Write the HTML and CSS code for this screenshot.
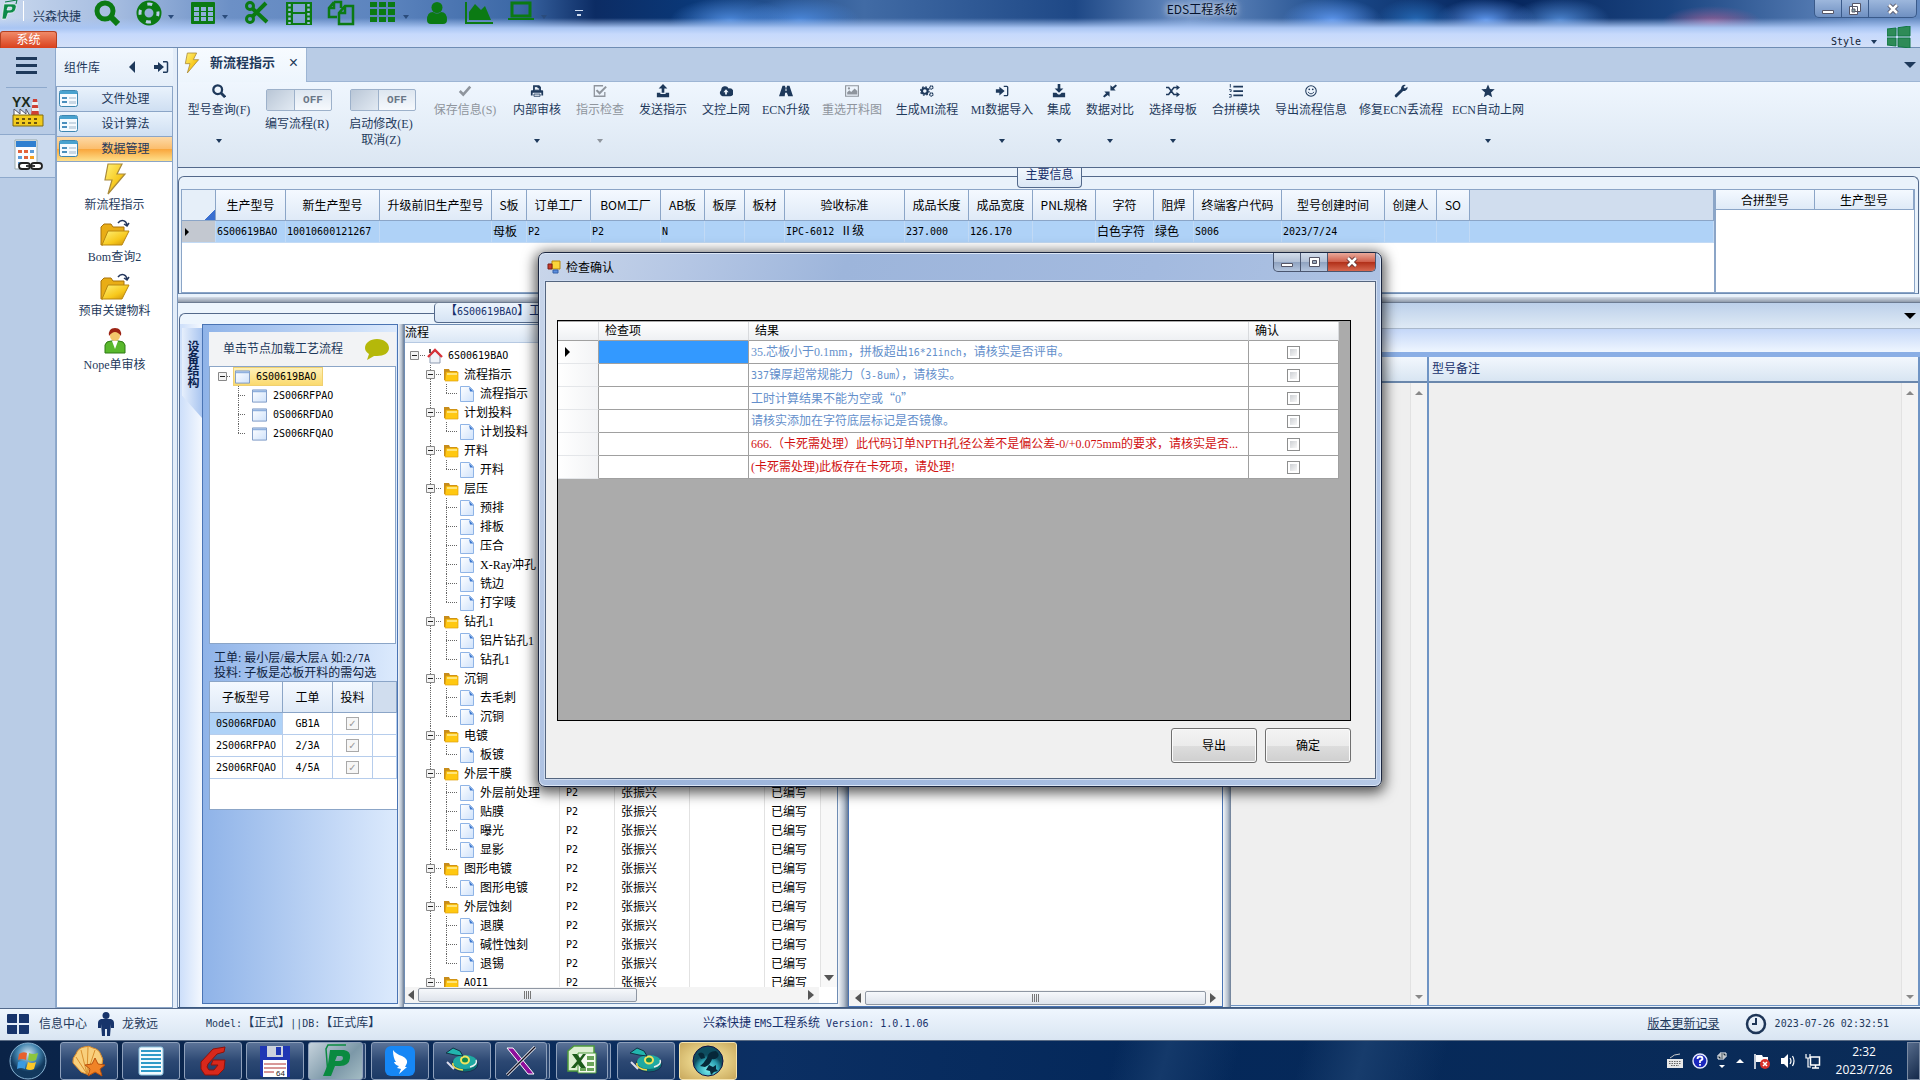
FILE: index.html
```html
<!DOCTYPE html>
<html lang="zh-CN">
<head>
<meta charset="utf-8">
<title>EDS工程系统</title>
<link rel="stylesheet" href="styles.css">
</head>
<body>
<svg class="defs" aria-hidden="true">
  <defs>
    <linearGradient id="gold" x1="0" y1="0" x2="1" y2="1"><stop offset="0" stop-color="#fff27a"/><stop offset=".6" stop-color="#f7c81c"/><stop offset="1" stop-color="#c98a08"/></linearGradient>
    <linearGradient id="paper" x1="0" y1="0" x2="1" y2="1"><stop offset="0" stop-color="#fff"/><stop offset="1" stop-color="#cfe2fb"/></linearGradient>
    <radialGradient id="orb" cx=".5" cy=".3"><stop offset="0" stop-color="#d5e6f2"/><stop offset=".6" stop-color="#3f82ad"/><stop offset="1" stop-color="#12395e"/></radialGradient>
    <radialGradient id="teal" cx=".5" cy=".8"><stop offset="0" stop-color="#7df0f2"/><stop offset=".7" stop-color="#2a9fb0"/><stop offset="1" stop-color="#0e4d60"/></radialGradient>
  </defs>
  <symbol id="bolt" viewBox="0 0 24 32"><path d="M5 1h14l-5 10h8L5 31l4-14H2z" fill="url(#gold)" stroke="#a98a3a" stroke-width="1.2"/></symbol>
  <symbol id="folder-open" viewBox="0 0 32 28"><path d="M2 8l3-3h7l2 3h11v5H9L4 26H2z" fill="#e9ad16" stroke="#a8720a"/><path d="M9 12h21l-7 14H3z" fill="url(#gold)" stroke="#b98710"/><path d="M19 4c3-4 8-3 9 2m-3-1l3 2 2-3" fill="none" stroke="#22355c" stroke-width="1.5"/></symbol>
  <symbol id="folder" viewBox="0 0 16 16"><path d="M1 2h5l1 2h7v9H1z" fill="#c88d1a"/><path d="M3 5h12v9H2z" fill="#ffc811" stroke="#e0a010" stroke-width=".7"/><path d="M4 6h10v2H4z" fill="#ffe57a"/></symbol>
  <symbol id="doc" viewBox="0 0 16 16"><path d="M1.500 .5h9l4 4v11h-13z" fill="url(#paper)" stroke="#8fb4e6"/><path d="M10 1l4.500 4.500H11z" fill="#3c78cf"/></symbol>
  <symbol id="win" viewBox="0 0 16 14"><path d="M.5 .5h15v13H.5z" fill="url(#paper)" stroke="#7b98c4"/><path d="M1 1h14v2H1z" fill="#8fb0de"/></symbol>
  <symbol id="form" viewBox="0 0 20 18"><rect x=".5" y=".5" width="18" height="16" rx="2" fill="#f4faff" stroke="#3d86b0"/><path d="M1 1h17v3H1z" fill="#49a2cf"/><path d="M3 7h5v2H3zm0 4h5v2H3z" fill="#4a8fbd"/><path d="M10 7h7v2h-7zm0 4h7v3h-7z" fill="#c9d8e5"/></symbol>
  <symbol id="home" viewBox="0 0 16 16"><path d="M3 8l5-5 5 5v7H3z" fill="#eef2f8" stroke="#8d9ab0"/><path d="M1 9l7-7 7 7" fill="none" stroke="#d8333a" stroke-width="2.400"/><path d="M2 1h2v4H2z" fill="#555"/></symbol>
  <symbol id="box" viewBox="0 0 9 9"><path d="M.5 .5h8v8h-8z" fill="#f4f4f4" stroke="#888"/><path d="M2 4.500h5" stroke="#222"/></symbol>
  <symbol id="search" viewBox="0 0 16 16"><circle cx="6.500" cy="6.500" r="5" fill="none" stroke="currentColor" stroke-width="2.600"/><path d="M10 10l5 5" stroke="currentColor" stroke-width="3.200"/></symbol>
  <symbol id="check" viewBox="0 0 16 16"><path d="M2 8l4 4 8-9" fill="none" stroke="currentColor" stroke-width="3"/></symbol>
  <symbol id="print" viewBox="0 0 16 16"><path d="M3.500 7V1.500h7l2 2V7M2 7h12q1 0 1 1v5h-2v-3H3v3H1V8q0-1 1-1z" fill="currentColor"/><path d="M5 3h4v1.500h2V7H5zM4.500 11.500h7v2.500h-7z" fill="#f0f6fd" stroke="currentColor"/></symbol>
  <symbol id="checkbox" viewBox="0 0 16 16"><path d="M13.500 9v5h-12V2h10" fill="none" stroke="currentColor" stroke-width="1.500"/><path d="M4 7l3.500 3.500L15 3" fill="none" stroke="currentColor" stroke-width="2.400"/></symbol>
  <symbol id="upload" viewBox="0 0 16 16"><path d="M8 0l5 5h-3.500v5h-3V5H3zM1 10h4v1.500h6V10h4v5H1z" fill="currentColor"/></symbol>
  <symbol id="download" viewBox="0 0 16 16"><path d="M6.500 0h3v5H13l-5 5-5-5h3.500zM1 10h4l2 2h2l2-2h4v5H1z" fill="currentColor"/></symbol>
  <symbol id="cloud" viewBox="0 0 16 16"><path d="M4 14a4 4 0 0 1-1.500-7A4.500 4.500 0 0 1 11 5a4 4 0 0 1 2 9z" fill="currentColor"/><path d="M8 6l3 3.500H9V12H7V9.500H5z" fill="#f0f6fd"/></symbol>
  <symbol id="road" viewBox="0 0 16 16"><path d="M4 2h3v2h2V2h3l4 12h-5.500L9 10H7l-.5 4H0z" fill="currentColor"/><path d="M7.400 5h1.200v3H7.400z" fill="#f0f6fd"/></symbol>
  <symbol id="image" viewBox="0 0 16 16"><path d="M.7 2h14.600v12H.7z" fill="none" stroke="currentColor" stroke-width="1.300"/><path d="M2.500 12V9.500L5 7l2 2 4-4 3 3v4z" fill="currentColor"/><circle cx="4.500" cy="5" r="1.300" fill="currentColor"/></symbol>
  <symbol id="gears" viewBox="0 0 16 16"><circle cx="5.500" cy="8" r="3.200" fill="none" stroke="currentColor" stroke-width="2.400"/><circle cx="5.500" cy="8" r="4.800" fill="none" stroke="currentColor" stroke-width="1.500" stroke-dasharray="1.900 1.870"/><circle cx="13" cy="4" r="1.800" fill="none" stroke="currentColor" stroke-width="1.500" stroke-dasharray="1.600 .4"/><circle cx="13" cy="12" r="1.800" fill="none" stroke="currentColor" stroke-width="1.500" stroke-dasharray="1.600 .4"/></symbol>
  <symbol id="signin" viewBox="0 0 16 16"><path d="M1 6h4V3l6 5-6 5v-3H1z" fill="currentColor"/><path d="M10 2.700h3.500q1 0 1 1v8.600q0 1-1 1H10" fill="none" stroke="currentColor" stroke-width="1.500"/></symbol>
  <symbol id="compress" viewBox="0 0 16 16"><path d="M8.500 1.500v6h6l-2-2L16 2l-1.500-1.500L11 3.500zM7.500 14.500v-6h-6l2 2L0 14l1.500 1.500L5.500 12.500z" fill="currentColor"/></symbol>
  <symbol id="shuffle" viewBox="0 0 16 16"><path d="M0 4h3l6 8h4M0 12h3l6-8h4" fill="none" stroke="currentColor" stroke-width="1.800"/><path d="M12 1l4 3-4 3zM12 9l4 3-4 3z" fill="currentColor"/></symbol>
  <symbol id="list" viewBox="0 0 16 16"><path d="M5 3h11M5 8h11M5 13h11" stroke="currentColor" stroke-width="2"/><path d="M1.500 0v4M0 6.500h2.500v2H1M0 12h2.500v3H0" fill="none" stroke="currentColor"/></symbol>
  <symbol id="smile" viewBox="0 0 16 16"><circle cx="8" cy="8" r="6" fill="none" stroke="currentColor" stroke-width="1.200"/><circle cx="6" cy="6" r="1" fill="currentColor"/><circle cx="10" cy="6" r="1" fill="currentColor"/><path d="M4.500 9q3.500 4.500 7 0" fill="none" stroke="currentColor"/></symbol>
  <symbol id="wrench" viewBox="0 0 16 16"><path d="M2.500 13.500l7-7" stroke="currentColor" stroke-width="3.400" stroke-linecap="round"/><path d="M13.500 1l-2.500 2.500 1.500 1.700L15.500 3a4.300 4.300 0 0 1-7 4A4.300 4.300 0 0 1 13.500 1z" fill="currentColor"/></symbol>
  <symbol id="star" viewBox="0 0 16 16"><path d="M8 .5l2.200 5.200 5.500.4-4.300 3.600 1.400 5.500L8 12.200l-4.800 3 1.400-5.500L.3 6.100l5.500-.4z" fill="currentColor"/></symbol>
  <symbol id="disc" viewBox="0 0 34 30"><ellipse cx="20" cy="18" rx="13" ry="8" fill="#0b6f73" stroke="#1c2f52"/><ellipse cx="20" cy="16" rx="12" ry="7" fill="#1fa9a2"/><path d="M8 17a12 6 0 0 0 10 7" fill="none" stroke="#f0d94a" stroke-width="1.500"/><path d="M31 14a12 6 0 0 1-6 7" fill="none" stroke="#eee" stroke-width="1.500"/><ellipse cx="20" cy="14" rx="4" ry="3.500" fill="#0f8a4f" stroke="#f4e35c" stroke-width="2"/><path d="M1 7l7-5 7 3 3 5-8-1z" fill="#22b5ae" stroke="#134"/><path d="M2 16l7 7" stroke="#dde" stroke-width="2"/></symbol>
</svg>

<header class="titlebar">
  <div class="quick">
    <svg class="logo" width="18" height="24" viewBox="0 0 18 24"><path d="M4 2l12-2-1 4" fill="none" stroke="#0a7a44"/><path d="M3 4h9q4 0 3 4-1 5-6 5H7l-2 6H1zm4 3L6 10h3q2 0 2-2 0-1-1-1z" fill="#0d8a4a" stroke="#fff" stroke-width=".6"/></svg>
    <span class="bar"></span>
    <span class="brand">兴森快捷</span>
    <button class="qi" aria-label="查询"><svg width="26" height="26" viewBox="0 0 26 26"><circle cx="11" cy="11" r="8" fill="none" stroke="#0b7a13" stroke-width="5"/><path d="M17 17l7 7" stroke="#0b7a13" stroke-width="6"/></svg></button>
    <button class="qi arrow-r" aria-label="帮助"><svg width="26" height="26" viewBox="0 0 26 26"><circle cx="13" cy="13" r="8.500" fill="none" stroke="#0b7a13" stroke-width="8"/><circle cx="13" cy="13" r="9" fill="none" stroke="#b9cce9" stroke-width="3" stroke-dasharray="5 9.140" stroke-dashoffset="2"/></svg></button>
    <button class="qi arrow-r" aria-label="表格"><svg width="26" height="26" viewBox="0 0 26 26"><rect x="1" y="2" width="24" height="22" rx="1" fill="#0b7a13"/><path d="M4 7h5v4H4zm7 0h5v4h-5zm7 0h5v4h-5zM4 12h5v4H4zm7 0h5v4h-5zm7 0h5v4h-5zM4 17h5v4H4zm7 0h5v4h-5zm7 0h5v4h-5z" fill="#8fb0da"/></svg></button>
    <button class="qi" aria-label="剪切"><svg width="26" height="26" viewBox="0 0 26 26"><g fill="none" stroke="#0b7a13"><circle cx="6" cy="6" r="3.500" stroke-width="3"/><circle cx="6" cy="19" r="3.500" stroke-width="3"/><path d="M8 8l15 14M8 17L22 3" stroke-width="4"/></g></svg></button>
    <button class="qi" aria-label="胶片"><svg width="28" height="26" viewBox="0 0 28 26"><path d="M1 2h26v23H1z" fill="#0b7a13"/><path d="M8 4h12v8H8zm0 10h12v9H8z" fill="#7fa3d2"/><path d="M4.500 4v20M23.500 4v20" stroke="#9db8de" stroke-width="2.500" stroke-dasharray="2.500 2"/></svg></button>
    <button class="qi" aria-label="复制"><svg width="28" height="26" viewBox="0 0 28 26"><path d="M7 2h7v6M7 2L2 8v9h8M7 2v6H2M18 6h8v18H12V13zM18 6v7h-6" fill="none" stroke="#0b7a13" stroke-width="2.500"/></svg></button>
    <button class="qi arrow-r" aria-label="九宫格"><svg width="28" height="26" viewBox="0 0 28 26"><path d="M1 2h7v5H1zm9 0h7v5h-7zm9 0h7v5h-7zM1 9h7v6H1zm9 0h7v6h-7zm9 0h7v6h-7zM1 17h7v5H1zm9 0h7v5h-7zm9 0h7v5h-7z" fill="#0b7a13"/></svg></button>
    <button class="qi" aria-label="用户"><svg width="26" height="26" viewBox="0 0 26 26"><circle cx="13" cy="7.500" r="5.500" fill="#0b7a13"/><path d="M3 20q0-8 6-8 4 3 8 0 6 0 6 8 0 4-4 4H7q-4 0-4-4z" fill="#0b7a13"/></svg></button>
    <button class="qi" aria-label="图表"><svg width="30" height="26" viewBox="0 0 30 26"><path d="M2 2v21h27" fill="none" stroke="#0b7a13" stroke-width="2"/><path d="M5 20v-8l6-8 6 6 4-4 6 14z" fill="#0b7a13"/></svg></button>
    <button class="qi arrow-r" aria-label="电脑"><svg width="28" height="26" viewBox="0 0 28 26"><path d="M5 3h18v13H5z" fill="none" stroke="#0b7a13" stroke-width="3"/><path d="M1 18h26v2H1z" fill="#0b7a13"/></svg></button>
    <span class="more"></span>
  </div>
  <h1 class="app-title">EDS工程系统</h1>
  <div class="winbtns"><button aria-label="最小化"><svg width="14" height="12"><path d="M1.500 7.500h11v3h-11z" fill="#fff" stroke="#556"/></svg></button><button aria-label="还原"><svg width="14" height="14"><path d="M4.500 1.500h8v8h-8zM1.500 4.500h8v8h-8z" fill="#fff" stroke="#556"/><path d="M4 7h3v3H4z" fill="#8aa" stroke="#556"/></svg></button><button class="x" aria-label="关闭"><svg width="14" height="12"><path d="M3 2l8 8M11 2l-8 8" stroke="#556" stroke-width="4.500"/><path d="M3 2l8 8M11 2l-8 8" stroke="#fff" stroke-width="2.500"/></svg></button></div>
  <button class="systab">系统</button>
  <div class="style-menu"><button class="m">Style</button><svg width="24" height="22" viewBox="0 0 24 22"><path d="M0 3l9-1v8H0zM11 1.700L23 0v10H11zM0 12h9v8l-9-1zM11 12h12v10l-12-1.500z" fill="#2e8b57" stroke="#174"/></svg></div>
</header>

<main class="main">
  <nav class="rail">
    <button class="burger" aria-label="菜单"><i></i><i></i><i></i></button>
    <button class="rail-item" aria-label="YX"><svg width="34" height="34" viewBox="0 0 34 34"><text x="1" y="13" font-family="Liberation Sans" font-weight="700" font-size="14" fill="#1c2b1c">YX</text><path d="M22 5h4l2 16h-8z" fill="#cf4034"/><path d="M21 8h6v3h-6zm0 6h7v3h-7z" fill="#eee"/><path d="M3 22v-7l6 5v-5l6 5v-5l4 7z" fill="#fff" stroke="#556"/><path d="M2 21h30v11H2z" fill="#f2cb1d" stroke="#806a10"/><path d="M5 24h3v2H5zm6 0h3v2h-3zm6 0h3v2h-3zm6 0h3v2h-3zM5 28h3v2H5zm6 0h3v2h-3zm6 0h3v2h-3zm6 0h3v2h-3z" fill="#6b5410"/></svg></button>
    <button class="rail-item on" aria-label="计算"><svg width="34" height="34" viewBox="0 0 34 34"><path d="M4 1h22v29H4z" fill="#fafcff" stroke="#9aa"/><path d="M5 2h20v6H5z" fill="#2f7fd0"/><g fill="#e2623a"><path d="M7 11h4v3H7zm6 0h4v3h-4zm0 6h4v3h-4z"/></g><path d="M19 11h4v3h-4zM7 17h4v3H7zM7 23h4v3H7z" fill="#5b9bd8"/><path d="M19 17h4v3h-4z" fill="#f5a020"/><g fill="none" stroke="#222" stroke-width="1.800"><rect x="8" y="24" width="11" height="6" rx="3" fill="#fff"/><rect x="20" y="24" width="11" height="6" rx="3" fill="#fff"/><path d="M15 27h9"/></g></svg></button>
  </nav>

  <aside class="side">
    <div class="side-head"><span>组件库</span><i class="tri-l"></i><svg width="16" height="16"><use href="#signin"/></svg></div>
    <button class="acc"><svg width="20" height="18"><use href="#form"/></svg><span>文件处理</span></button>
    <button class="acc"><svg width="20" height="18"><use href="#form"/></svg><span>设计算法</span></button>
    <button class="acc on"><svg width="20" height="18"><use href="#form"/></svg><span>数据管理</span></button>
    <div class="side-list">
      <a href="#"><svg width="24" height="32"><use href="#bolt"/></svg>新流程指示</a>
      <a href="#"><svg width="32" height="28"><use href="#folder-open"/></svg>Bom查询2</a>
      <a href="#"><svg width="32" height="28"><use href="#folder-open"/></svg>预审关键物料</a>
      <a href="#"><svg width="24" height="28" viewBox="0 0 24 28"><path d="M2 26v-8q1-4 6-4h8q5 0 6 4v8z" fill="#59b82c" stroke="#2f7a14"/><path d="M9 14h6l-3 8z" fill="#fff"/><circle cx="12" cy="9" r="5" fill="#f3c66b"/><path d="M6 9q-1-8 6-8t6 8q-3-4-6-4T6 9z" fill="#9c2313"/></svg>Nope单审核</a>
    </div>
  </aside>

  <section class="work">
    <div class="tabs"><div class="tab"><svg width="16" height="22"><use href="#bolt"/></svg><b>新流程指示</b><button aria-label="关闭标签">×</button></div><i class="tri-d big"></i></div>
    <div class="tools">
      <button class="tool w60 dd"><svg><use href="#search"/></svg>型号查询(F)</button>
      <div class="tool w66"><span class="toggle"><input type="checkbox" id="t1"><span>OFF</span></span><label for="t1">编写流程(R)</label></div>
      <div class="tool w66 second"><span class="toggle"><input type="checkbox" id="t2"><span>OFF</span></span><label for="t2">启动修改(E)<br>取消(Z)</label></div>
      <button class="tool w66 off"><svg><use href="#check"/></svg>保存信息(S)</button>
      <button class="tool w48 dd"><svg><use href="#print"/></svg>内部审核</button>
      <button class="tool w48 dd off"><svg><use href="#checkbox"/></svg>指示检查</button>
      <button class="tool w48"><svg><use href="#upload"/></svg>发送指示</button>
      <button class="tool w48"><svg><use href="#cloud"/></svg>文控上网</button>
      <button class="tool w42"><svg><use href="#road"/></svg>ECN升级</button>
      <button class="tool w60 off"><svg><use href="#image"/></svg>重选开料图</button>
      <button class="tool w60"><svg><use href="#gears"/></svg>生成MI流程</button>
      <button class="tool w60 dd"><svg><use href="#signin"/></svg>MI数据导入</button>
      <button class="tool w24 dd"><svg><use href="#download"/></svg>集成</button>
      <button class="tool w48 dd"><svg><use href="#compress"/></svg>数据对比</button>
      <button class="tool w48 dd"><svg><use href="#shuffle"/></svg>选择母板</button>
      <button class="tool w48"><svg><use href="#list"/></svg>合拼模块</button>
      <button class="tool w72"><svg><use href="#smile"/></svg>导出流程信息</button>
      <button class="tool w78"><svg><use href="#wrench"/></svg>修复ECN丢流程</button>
      <button class="tool w66 dd"><svg><use href="#star"/></svg>ECN自动上网</button>
    </div>

    <section class="info">
      <h2 class="cap">主要信息</h2>
      <div class="info-body">
        <div class="info-left">
          <table class="grid">
            <colgroup><col class="c34"><col class="c70"><col class="c94"><col class="c112"><col class="c35"><col class="c64"><col class="c70"><col class="c44"><col class="c40"><col class="c40"><col class="c120"><col class="c64"><col class="c64"><col class="c63"><col class="c58"><col class="c40"><col class="c88"><col class="c103"><col class="c52"><col class="c33"><col></colgroup>
            <thead><tr><th class="corner"></th><th>生产型号</th><th>新生产型号</th><th>升级前旧生产型号</th><th>S板</th><th>订单工厂</th><th>BOM工厂</th><th>AB板</th><th>板厚</th><th>板材</th><th>验收标准</th><th>成品长度</th><th>成品宽度</th><th>PNL规格</th><th>字符</th><th>阻焊</th><th>终端客户代码</th><th>型号创建时间</th><th>创建人</th><th>SO</th><th class="rest"></th></tr></thead>
            <tbody><tr><td class="mark"><i class="tri-r"></i></td><td class="m">6S00619BAO</td><td class="m">10010600121267</td><td></td><td>母板</td><td class="m">P2</td><td class="m">P2</td><td class="m">N</td><td></td><td></td><td><span class="m">IPC-6012 </span>Ⅱ级</td><td class="m">237.000</td><td class="m">126.170</td><td></td><td>白色字符</td><td>绿色</td><td class="m">S006</td><td class="m">2023/7/24</td><td></td><td></td><td></td></tr></tbody>
          </table>
        </div>
        <div class="info-right">
          <table class="grid small"><thead><tr><th>合拼型号</th><th>生产型号</th></tr></thead></table>
        </div>
      </div>
    </section>

    <div class="hsplit"></div>

    <div class="lower">
      <div class="flow">
        <h2 class="cap2">【<span class="m">6S00619BAO</span>】工</h2>
        <div class="flow-body">
          <div class="strip"><button>设备结构</button></div>
          <div class="device">
            <div class="hint">单击节点加载工艺流程<svg width="26" height="22" viewBox="0 0 26 22"><path d="M13 1c7 0 12 4 12 9s-5 8-12 8l-3 0-7 4 2-6C2 14 1 12 1 10c0-5 5-9 12-9z" fill="#b5b80a"/></svg></div>
            <div class="dtree m">
              <div class="node"><i class="c e0"><svg><use href="#box"/></svg></i><span class="sel"><svg><use href="#win"/></svg>6S00619BAO</span></div>
              <div class="node"><i class="c"></i><i class="c t"></i><svg><use href="#win"/></svg>2S006RFPAO</div>
              <div class="node"><i class="c"></i><i class="c t"></i><svg><use href="#win"/></svg>0S006RFDAO</div>
              <div class="node"><i class="c"></i><i class="c l"></i><svg><use href="#win"/></svg>2S006RFQAO</div>
            </div>
            <p class="note">工单: 最小层/最大层A 如:<span class="m">2/7A</span><br>投料: 子板是芯板开料的需勾选</p>
            <div class="subs">
              <table class="grid sub">
                <colgroup><col class="c73"><col class="c50"><col class="c40"><col></colgroup>
                <thead><tr><th>子板型号</th><th>工单</th><th>投料</th><th class="rest"></th></tr></thead>
                <tbody>
                  <tr><td class="m hl">0S006RFDAO</td><td class="m">GB1A</td><td><input type="checkbox" checked disabled aria-label="投料"></td><td></td></tr>
                  <tr><td class="m">2S006RFPAO</td><td class="m">2/3A</td><td><input type="checkbox" checked disabled aria-label="投料"></td><td></td></tr>
                  <tr><td class="m">2S006RFQAO</td><td class="m">4/5A</td><td><input type="checkbox" checked disabled aria-label="投料"></td><td></td></tr>
                </tbody>
              </table>
            </div>
          </div>
          <div class="vsplit s6"></div>
          <div class="proc">
            <div class="proc-head">流程</div>
            <div class="proc-view">
              <table class="ptree">
                <colgroup><col class="c155"><col class="c55"><col class="c75"><col class="c75"><col class="c56"></colgroup>
                <tbody>
                <tr><td><div class="r m"><i class="c e0"><svg><use href="#box"/></svg></i><svg><use href="#home"/></svg>6S00619BAO</div></td></tr>
                <tr><td><div class="r"><i class="c"></i><i class="c t"><svg><use href="#box"/></svg></i><svg><use href="#folder"/></svg>流程指示</div></td></tr>
                <tr><td><div class="r"><i class="c"></i><i class="c v"></i><i class="c l"></i><svg><use href="#doc"/></svg>流程指示</div></td></tr>
                <tr><td><div class="r"><i class="c"></i><i class="c t"><svg><use href="#box"/></svg></i><svg><use href="#folder"/></svg>计划投料</div></td></tr>
                <tr><td><div class="r"><i class="c"></i><i class="c v"></i><i class="c l"></i><svg><use href="#doc"/></svg>计划投料</div></td></tr>
                <tr><td><div class="r"><i class="c"></i><i class="c t"><svg><use href="#box"/></svg></i><svg><use href="#folder"/></svg>开料</div></td></tr>
                <tr><td><div class="r"><i class="c"></i><i class="c v"></i><i class="c l"></i><svg><use href="#doc"/></svg>开料</div></td></tr>
                <tr><td><div class="r"><i class="c"></i><i class="c t"><svg><use href="#box"/></svg></i><svg><use href="#folder"/></svg>层压</div></td></tr>
                <tr><td><div class="r"><i class="c"></i><i class="c v"></i><i class="c t"></i><svg><use href="#doc"/></svg>预排</div></td></tr>
                <tr><td><div class="r"><i class="c"></i><i class="c v"></i><i class="c t"></i><svg><use href="#doc"/></svg>排板</div></td></tr>
                <tr><td><div class="r"><i class="c"></i><i class="c v"></i><i class="c t"></i><svg><use href="#doc"/></svg>压合</div></td></tr>
                <tr><td><div class="r"><i class="c"></i><i class="c v"></i><i class="c t"></i><svg><use href="#doc"/></svg>X-Ray冲孔</div></td></tr>
                <tr><td><div class="r"><i class="c"></i><i class="c v"></i><i class="c t"></i><svg><use href="#doc"/></svg>铣边</div></td></tr>
                <tr><td><div class="r"><i class="c"></i><i class="c v"></i><i class="c l"></i><svg><use href="#doc"/></svg>打字唛</div></td></tr>
                <tr><td><div class="r"><i class="c"></i><i class="c t"><svg><use href="#box"/></svg></i><svg><use href="#folder"/></svg>钻孔1</div></td></tr>
                <tr><td><div class="r"><i class="c"></i><i class="c v"></i><i class="c t"></i><svg><use href="#doc"/></svg>铝片钻孔1</div></td></tr>
                <tr><td><div class="r"><i class="c"></i><i class="c v"></i><i class="c l"></i><svg><use href="#doc"/></svg>钻孔1</div></td></tr>
                <tr><td><div class="r"><i class="c"></i><i class="c t"><svg><use href="#box"/></svg></i><svg><use href="#folder"/></svg>沉铜</div></td></tr>
                <tr><td><div class="r"><i class="c"></i><i class="c v"></i><i class="c t"></i><svg><use href="#doc"/></svg>去毛刺</div></td></tr>
                <tr><td><div class="r"><i class="c"></i><i class="c v"></i><i class="c l"></i><svg><use href="#doc"/></svg>沉铜</div></td></tr>
                <tr><td><div class="r"><i class="c"></i><i class="c t"><svg><use href="#box"/></svg></i><svg><use href="#folder"/></svg>电镀</div></td></tr>
                <tr><td><div class="r"><i class="c"></i><i class="c v"></i><i class="c l"></i><svg><use href="#doc"/></svg>板镀</div></td></tr>
                <tr><td><div class="r"><i class="c"></i><i class="c t"><svg><use href="#box"/></svg></i><svg><use href="#folder"/></svg>外层干膜</div></td></tr>
                <tr><td><div class="r"><i class="c"></i><i class="c v"></i><i class="c t"></i><svg><use href="#doc"/></svg>外层前处理</div></td><td class="m">P2</td><td>张振兴</td><td></td><td>已编写</td></tr>
                <tr><td><div class="r"><i class="c"></i><i class="c v"></i><i class="c t"></i><svg><use href="#doc"/></svg>贴膜</div></td><td class="m">P2</td><td>张振兴</td><td></td><td>已编写</td></tr>
                <tr><td><div class="r"><i class="c"></i><i class="c v"></i><i class="c t"></i><svg><use href="#doc"/></svg>曝光</div></td><td class="m">P2</td><td>张振兴</td><td></td><td>已编写</td></tr>
                <tr><td><div class="r"><i class="c"></i><i class="c v"></i><i class="c l"></i><svg><use href="#doc"/></svg>显影</div></td><td class="m">P2</td><td>张振兴</td><td></td><td>已编写</td></tr>
                <tr><td><div class="r"><i class="c"></i><i class="c t"><svg><use href="#box"/></svg></i><svg><use href="#folder"/></svg>图形电镀</div></td><td class="m">P2</td><td>张振兴</td><td></td><td>已编写</td></tr>
                <tr><td><div class="r"><i class="c"></i><i class="c v"></i><i class="c l"></i><svg><use href="#doc"/></svg>图形电镀</div></td><td class="m">P2</td><td>张振兴</td><td></td><td>已编写</td></tr>
                <tr><td><div class="r"><i class="c"></i><i class="c t"><svg><use href="#box"/></svg></i><svg><use href="#folder"/></svg>外层蚀刻</div></td><td class="m">P2</td><td>张振兴</td><td></td><td>已编写</td></tr>
                <tr><td><div class="r"><i class="c"></i><i class="c v"></i><i class="c t"></i><svg><use href="#doc"/></svg>退膜</div></td><td class="m">P2</td><td>张振兴</td><td></td><td>已编写</td></tr>
                <tr><td><div class="r"><i class="c"></i><i class="c v"></i><i class="c t"></i><svg><use href="#doc"/></svg>碱性蚀刻</div></td><td class="m">P2</td><td>张振兴</td><td></td><td>已编写</td></tr>
                <tr><td><div class="r"><i class="c"></i><i class="c v"></i><i class="c l"></i><svg><use href="#doc"/></svg>退锡</div></td><td class="m">P2</td><td>张振兴</td><td></td><td>已编写</td></tr>
                <tr><td><div class="r m"><i class="c"></i><i class="c t"><svg><use href="#box"/></svg></i><svg><use href="#folder"/></svg>AOI1</div></td><td class="m">P2</td><td>张振兴</td><td></td><td>已编写</td></tr>
                </tbody>
              </table>
              <div class="vscroll"><i class="tri-d grey"></i></div>
            </div>
            <div class="hscroll gap"><i class="tri-l grey"></i><span class="thumb part"><b></b></span><i class="tri-r grey end"></i></div>
          </div>
          <div class="vsplit s10"></div>
          <div class="mid"><div class="hscroll"><i class="tri-l grey"></i><span class="thumb"><b></b></span><i class="tri-r grey"></i></div></div>
        </div>
      </div>
      <div class="vsplit s8"></div>
      <div class="remark">
        <div class="band1"><i class="tri-d big black"></i></div>
        <div class="band2"></div>
        <div class="remark-cols">
          <div class="rcol first"><div class="rhead"></div><div class="rbody"><div class="rscroll"><i class="tri-u"></i><i class="tri-d pale"></i></div></div></div>
          <div class="rcol"><div class="rhead">型号备注</div><div class="rbody"><div class="rscroll"><i class="tri-u"></i><i class="tri-d pale"></i></div></div></div>
        </div>
      </div>
    </div>
  </section>
</main>

<footer class="status">
  <svg width="22" height="20" viewBox="0 0 22 20"><path d="M1 0h9v9H1q-1 0-1-1V1q0-1 1-1zM12 0h9q1 0 1 1v8H12zM0 11h10v9H1q-1 0-1-1zM12 11h10v8q0 1-1 1h-9z" fill="#17346b"/></svg>
  <span class="s-info">信息中心</span>
  <svg width="16" height="24" viewBox="0 0 16 24"><circle cx="8" cy="3.500" r="3.500" fill="#17346b"/><path d="M3 7h10q3 1 3 4v5h-3v-4l-1 12H9v-7H7v7H4L3 12v4H0v-5q0-3 3-4z" fill="#17346b"/></svg>
  <span class="s-user">龙敦远</span>
  <span class="s-model"><span class="m">Model:</span>【正式】<span class="m">||DB:</span>【正式库】</span>
  <span class="s-ver">兴森快捷 <span class="m">EMS</span>工程系统<span class="m"> Version: 1.0.1.06</span></span>
  <a href="#">版本更新记录</a>
  <svg class="clk" width="22" height="22" viewBox="0 0 22 22"><circle cx="11" cy="11" r="9" fill="none" stroke="#1d3557" stroke-width="2.500"/><path d="M11 5v6H7" fill="none" stroke="#1d3557" stroke-width="2"/></svg>
  <time class="m">2023-07-26 02:32:51</time>
</footer>

<div class="taskbar">
  <button class="start" aria-label="开始"><svg width="38" height="38" viewBox="0 0 38 38"><circle cx="19" cy="19" r="18" fill="url(#orb)" stroke="#89b4d4"/><path d="M10 12q4-3 8-1l-1 7q-4-2-8 0z" fill="#e8602c"/><path d="M20 11q4 2 9 0l-2 7q-4 2-8 0z" fill="#8cc63e"/><path d="M9 20q4-2 8 0l-1 7q-4-2-8 0z" fill="#3d9be0"/><path d="M19 20q4 2 8 0l-2 7q-4 2-8 0z" fill="#fbc829"/></svg></button>
  <button class="task" aria-label="贝壳"><svg width="34" height="32" viewBox="0 0 34 32"><path d="M17 30L9 27 1 18q-1-5 3-9 2-6 8-7 5-2 9 1 6 1 8 7 3 4 1 9l-7 8z" fill="#f8cf7c" stroke="#d98a2b"/><path d="M15 29L4 12M15 29L9 5M15 29l1-27M15 29l8-24" stroke="#d9902f"/><path d="M23 13l3 6 7 1-5 4 2 7-7-4-7 4 2-7-5-4 7-1z" fill="#f08326" stroke="#b9510e"/></svg></button>
  <button class="task" aria-label="记事本"><svg width="26" height="30" viewBox="0 0 26 30"><rect x="1" y="1" width="24" height="28" rx="2" fill="#f4fbff" stroke="#8cc4e0"/><path d="M3 5h20M3 9h20M3 13h20M3 17h20M3 21h20M3 25h20" stroke="#2f9ac8" stroke-width="2"/></svg></button>
  <button class="task" aria-label="G"><svg width="32" height="32" viewBox="0 0 32 32"><path d="M28 2L16 4 4 17v7l4 6h13l6-6 1-9H16l-2 5h7l-4 5h-5l-2-3 1-3 9-10 7-2z" fill="#d8281c" stroke="#8e120b"/></svg></button>
  <button class="task" aria-label="磁盘"><svg width="32" height="34" viewBox="0 0 32 34"><path d="M1 2h30v31H3l-2-2z" fill="#1f37b4"/><path d="M8 2h16v11H8z" fill="#cdd3dd"/><path d="M17 3h5v8h-5z" fill="#1f37b4"/><path d="M4 16h24v17H4z" fill="#fff"/><path d="M5 20h22M5 24h22M5 28h10" stroke="#b03030"/><text x="17" y="32" font-family="Liberation Sans" font-size="8" fill="#222">64</text></svg></button>
  <button class="task active stack" aria-label="EDS"><svg width="32" height="34" viewBox="0 0 32 34"><path d="M8 31L6 5l2-4h18" fill="none" stroke="#0a8a40" stroke-width="1.500"/><path d="M10 6h14q7 1 6 8-1 8-10 8h-5l-4 10H3l5-12zm7 6l-2 5h4q4 0 4-3 0-2-2-2z" fill="#0a8a40"/></svg></button>
  <button class="task" aria-label="钉钉"><svg width="30" height="30" viewBox="0 0 30 30"><rect width="30" height="30" rx="6" fill="#1687f5"/><path d="M8 4q3 4 9 6 6 3 5 7l-2 4h2l-8 7 2-5-4-1 2-2q-4-1-5-4l2 0Q8 12 8 4z" fill="#fff"/></svg></button>
  <button class="task" aria-label="工具"><svg width="34" height="30"><use href="#disc"/></svg></button>
  <button class="task narrow stack" aria-label="X"><svg width="32" height="30" viewBox="0 0 32 30"><path d="M2 2h6l21 26h-6z" fill="#8e0f9b" stroke="#fff"/><path d="M30 1L2 29" stroke="#fff" stroke-width="3"/><path d="M30 1L2 29" stroke="#151020" stroke-width="1.500"/></svg></button>
  <button class="task narrow stack" aria-label="Excel"><svg width="32" height="32" viewBox="0 0 32 32"><path d="M2 6l6-5h20v25H2z" fill="#dcefd2" stroke="#4d9a3c" stroke-width="1.500"/><path d="M12 8h18v20H12z" fill="#f4faf0" stroke="#4d9a3c"/><path d="M21 11h7v4h-7zm0 6h7v4h-7zm-7 6h6v3h-6zm7 0h7v3h-7z" fill="#6aa55a"/><path d="M6 9h5l3 4 3-4h3l-5 7 5 7h-5l-3-4-3 4H5l6-7z" fill="#1d5c1b"/></svg></button>
  <button class="task" aria-label="工具"><svg width="34" height="30"><use href="#disc"/></svg></button>
  <button class="task hot" aria-label="检查"><svg width="32" height="32" viewBox="0 0 32 32"><circle cx="16" cy="16" r="15" fill="url(#teal)" stroke="#114"/><path d="M6 9q3-3 6 0l1 4-4 1zM15 13q1-7 9-7 4 3 2 6-3 3-6 2-1 5-7 8l-5-1q4-3 7-8zM17 20l4 2 3-2v4l2 2-4 1-3 3-1-4-4-1z" fill="#06283a"/></svg></button>
  <div class="tray">
    <svg width="16" height="16" viewBox="0 0 16 16"><path d="M3 5q4-4 10-4" fill="none" stroke="#ccc"/><rect y="6" width="16" height="9" fill="#e8e8e8"/><path d="M2 8.500h12M2 10.500h12M4 12.500h8" stroke="#666" stroke-dasharray="1.500 1"/></svg>
    <svg width="16" height="16" viewBox="0 0 16 16"><circle cx="8" cy="8" r="7" fill="#1a27bd" stroke="#e8ebff" stroke-width="1.400"/><path d="M5.500 6q0-2.500 2.500-2.500T10.500 6Q10 7 8 8v2M8 11v1.800" fill="none" stroke="#fff" stroke-width="1.800"/></svg>
    <svg width="10" height="18" viewBox="0 0 10 18"><path d="M3 1h6v4H3zM1 3h6v4H1z" fill="#123" stroke="#fff"/><path d="M2 13h6l-3 3z" fill="#fff"/></svg>
    <svg width="8" height="6" viewBox="0 0 8 6"><path d="M0 5l4-4 4 4z" fill="#fff"/></svg>
    <svg width="18" height="18" viewBox="0 0 18 18"><path d="M2 2v15" stroke="#fff" stroke-width="1.500"/><path d="M3 3h6l1 2h5v7H9L8 10H3z" fill="#fff"/><circle cx="12" cy="12" r="5" fill="#d8302a"/><path d="M10 10l4 4M14 10l-4 4" stroke="#fff" stroke-width="1.500"/></svg>
    <svg width="16" height="16" viewBox="0 0 16 16"><path d="M1 5h3l4-4v14l-4-4H1z" fill="#fff"/><path d="M10 5q2 3 0 6M12.500 3q3 5 0 10" fill="none" stroke="#fff" stroke-width="1.200"/></svg>
    <svg width="16" height="16" viewBox="0 0 16 16"><path d="M5.500 4h9v8h-9zM7 15h7M10.500 12v3" fill="none" stroke="#fff" stroke-width="1.500"/><path d="M1 1v4h4V1M3 5v9h3" fill="none" stroke="#fff" stroke-width="1.200"/></svg>
    <div class="clock">2:32<br>2023/7/26</div>
    <button class="peek" aria-label="显示桌面"></button>
  </div>
</div>

<section class="dialog" role="dialog" aria-labelledby="dlg-title">
  <header>
    <svg width="14" height="14" viewBox="0 0 14 14"><path d="M5 1h8v8H5z" fill="#fbd53a" stroke="#b8870c"/><path d="M1 4h4v5H1z" fill="#c93a2c" stroke="#7a1c12"/><path d="M6 10h5v3H6z" fill="#5b8fe0" stroke="#3560a8"/></svg>
    <h2 id="dlg-title">检查确认</h2>
    <div class="dbtns"><button aria-label="最小化"><svg width="14" height="12"><path d="M1.500 7.500h11v3h-11z" fill="#fff" stroke="#556"/></svg></button><button aria-label="最大化"><svg width="13" height="12"><path d="M1.500 1.500h10v9h-10z" fill="#fff" stroke="#556"/><path d="M4.500 4.500h4v3h-4z" fill="#9ab" stroke="#556"/></svg></button><button class="close" aria-label="关闭"><svg width="14" height="12"><path d="M3 2l8 8M11 2l-8 8" stroke="#633" stroke-width="4.500"/><path d="M3 2l8 8M11 2l-8 8" stroke="#fff" stroke-width="2.500"/></svg></button></div>
  </header>
  <div class="client">
    <div class="dgrid">
      <table>
        <colgroup><col class="c41"><col class="c150"><col class="c500"><col class="c90"></colgroup>
        <thead><tr><th></th><th>检查项</th><th>结果</th><th>确认</th></tr></thead>
        <tbody>
          <tr><td><i class="tri-r"></i></td><td class="cur"></td><td>35.芯板小于0.1mm，拼板超出<span class="m">16*21inch</span>，请核实是否评审。</td><td><input type="checkbox" aria-label="确认"></td></tr>
          <tr><td></td><td></td><td><span class="m">337</span>镍厚超常规能力（<span class="m">3-8um</span>），请核实。</td><td><input type="checkbox" aria-label="确认"></td></tr>
          <tr><td></td><td></td><td>工时计算结果不能为空或<span class="cjk">“</span>0<span class="cjk">”</span></td><td><input type="checkbox" aria-label="确认"></td></tr>
          <tr><td></td><td></td><td>请核实添加在字符底层标记是否镜像。</td><td><input type="checkbox" aria-label="确认"></td></tr>
          <tr class="red"><td></td><td></td><td>666.（卡死需处理）此代码订单NPTH孔径公差不是偏公差-0/+0.075mm的要求，请核实是否...</td><td><input type="checkbox" aria-label="确认"></td></tr>
          <tr class="red"><td></td><td></td><td>(卡死需处理)此板存在卡死项，请处理!</td><td><input type="checkbox" aria-label="确认"></td></tr>
        </tbody>
      </table>
    </div>
    <div class="actions"><button>导出</button><button>确定</button></div>
  </div>
</section>
</body>
</html>
```
FILE: styles.css
```css
* { box-sizing: border-box; }
html, body { height: 100%; }
body {
  margin: 0;
  display: flex;
  flex-direction: column;
  overflow: hidden;
  font: 12px/16px "Liberation Serif", "Noto Sans CJK SC", serif;
  color: #1e395b;
  background: #bccee6;
}
button { font: inherit; color: inherit; background: none; border: 0; padding: 0; margin: 0; }
h1, h2, p { margin: 0; font: inherit; }
a { color: inherit; text-decoration: none; }
svg { display: block; flex: none; }
i { display: block; flex: none; }
.defs { position: absolute; width: 0; height: 0; }
.m { font-family: "DejaVu Sans Mono", monospace; font-size: 10px; white-space: pre; }
.cjk { font-family: "Noto Sans CJK SC", sans-serif; }

.tri-d, .tri-u, .tri-l, .tri-r { width: 0; height: 0; border: 4px solid transparent; }
.tri-d { border-top-color: #1e395b; border-bottom: 0; }
.tri-u { border-bottom-color: #888; border-top: 0; }
.tri-l { border-right-color: #1e395b; border-left: 0; }
.tri-r { border-left-color: #000; border-right: 0; }
.tri-d.big { border-width: 6px 6px 0; }
.tri-d.black { border-top-color: #000; }
.tri-d.pale { border-top-color: #888; }
.tri-d.grey { border-width: 6px 5px 0; border-top-color: #555; }
.tri-l.grey { border-width: 5px 6px 5px 0; border-right-color: #555; }
.tri-r.grey { border-width: 5px 0 5px 6px; border-left-color: #555; }

/* title bar */
.titlebar {
  display: grid;
  grid-template: 28px 20px / 1fr auto 1fr;
  flex: none;
  background:
    linear-gradient(#0000 18px, #a9c5f3 28px, #c6d9fc 34px, #d3e0f8 47px, #6f8db4 47px),
    radial-gradient(60px 22px at 730px 20px, #4a86d8, #0000),
    radial-gradient(60px 22px at 800px 20px, #4a86d8, #0000),
    radial-gradient(50px 22px at 1332px 20px, #5b94ea, #0000),
    radial-gradient(40px 22px at 1416px 20px, #2568b4, #0000),
    radial-gradient(50px 22px at 1486px 20px, #5b94ea, #0000),
    radial-gradient(50px 22px at 1560px 20px, #4a82cc, #0000),
    radial-gradient(50px 16px at 1712px 22px, #8e5d94, #0000),
    linear-gradient(90deg, #c9d8ee, #a5bce0 6%, #6c90c6 12%, #5c84be 20%, #3c68a6 27%, #0c2c64 31%, #0a3878 36%, #416ba5 45%, #1e4886 56%, #6a8fc4 62%, #1a4888 70%, #04235a 78%, #1a4480 87%, #6389c0 97%);
}
.quick { display: flex; align-items: flex-start; height: 28px; }
.logo { margin-left: 1px; }
.bar { width: 1px; height: 20px; margin: 1px 9px 0 4px; background: #fff; }
.brand { flex: none; line-height: 18px; padding-top: 8px; width: 52px; }
.qi { flex: none; display: flex; justify-content: center; width: 42px; height: 26px; margin: 0 -1px 0 1px; }
.qi.arrow-r { width: 54px; gap: 6px; align-items: center; }
.qi.arrow-r::after { content: ""; border: 3px solid transparent; border-top: 4px solid #2b4c7c; border-bottom: 0; margin-top: 8px; }
.more { width: 8px; height: 6px; margin: 10px 0 0 22px; border-top: 1px solid #cfdcf0; background: linear-gradient(#cfdcf0, #cfdcf0) 2px 3px / 4px 2px no-repeat; }
.app-title { color: #05122c; font: 12px/18px "Noto Sans CJK SC", sans-serif; text-shadow: 0 0 6px #fff, 0 0 10px #ccd; padding-left: 484px; }
.winbtns { justify-self: end; display: flex; height: 18px; margin-right: 3px; border: 1px solid #3a5a8a; border-top: 0; border-radius: 0 0 5px 5px; background: linear-gradient(#9db7dc, #6f90c2); }
.winbtns button { width: 27px; display: grid; place-items: center; border-right: 1px solid #3a5a8a; }
.winbtns .x { width: 47px; border: 0; }
.systab { grid-row: 2; grid-column: 1; width: 57px; height: 17px; margin-top: 3px; line-height: 15px; color: #fff; background: linear-gradient(#f08a68, #d9401c); border: 1px solid #b5401f; border-bottom: 0; border-radius: 3px 3px 0 0; }
.style-menu { grid-row: 2; grid-column: 3; justify-self: end; display: flex; align-items: flex-end; gap: 10px; padding-right: 9px; }
.style-menu svg { margin-top: -3px; }
.style-menu button { display: flex; align-items: center; gap: 10px; height: 14px; margin-bottom: -1px; color: #123; }
.style-menu button::after { content: ""; border: 3px solid transparent; border-top: 4px solid #1e395b; border-bottom: 0; }

.main { flex: 1; display: flex; min-height: 0; }

/* left rail */
.rail { width: 56px; flex: none; display: flex; flex-direction: column; background: #b9cce6; border-right: 1px solid #8ea9cc; }
.burger { height: 40px; margin: 0 8px 0 6px; display: flex; flex-direction: column; align-items: center; gap: 4px; padding-top: 9px; border-bottom: 1px solid #8ea9cc; }
.burger i { width: 21px; height: 3px; background: #1e395b; }
.rail-item { height: 47px; display: grid; place-items: center; border-bottom: 1px solid #8ea9cc; }
.rail-item.on { height: 43px; background: #cbdaee; }

/* component library */
.side { width: 122px; flex: none; display: flex; flex-direction: column; padding-right: 4px; background: #e3edf9; border-right: 1px solid #7f98bb; }
.side-head { display: flex; align-items: center; height: 38px; padding: 0 4px 0 8px; background: linear-gradient(#f1f7fe, #e4eef9); font-family: "Noto Sans CJK SC", sans-serif; }
.side-head span { flex: 1; }
.side-head .tri-l { border-width: 6px 6px 6px 0; margin-right: 18px; }
.acc { display: flex; align-items: center; height: 25px; padding-left: 2px; background: linear-gradient(#e9f2fc, #cfdff2); border: 1px solid #8ba5c7; border-bottom-width: 0; }
.acc span { flex: 1; }
.acc.on { background: linear-gradient(#fdd9a6, #fbbd6c 50%, #f9a63c 51%, #fee08c); }
.side-list { flex: 1; display: flex; flex-direction: column; background: #fff; border: 1px solid #8ba5c7; }
.side-list a { display: flex; flex-direction: column; align-items: center; height: 54px; gap: 3px; line-height: 14px; }
.side-list a:first-child { height: 57px; padding-top: 1px; }

/* workspace */
.work { flex: 1; min-width: 0; display: flex; flex-direction: column; background: #e9f2fb; }
.tabs { display: flex; align-items: center; justify-content: space-between; height: 34px; padding-right: 4px; background: #b9cce6; border-bottom: 1px solid #9db5d4; }
.tab { display: flex; align-items: center; width: 129px; height: 34px; padding: 0 8px 3px 6px; background: linear-gradient(#f7fbff, #edf5fd); border-right: 1px solid #9db5d4; }
.tab b { flex: 1; padding-left: 10px; font-size: 13px; }
.tab button { font: 16px/16px "Liberation Sans", sans-serif; }
.tools { display: flex; align-items: flex-start; gap: 15px; height: 86px; padding: 2px 8px 0 11px; background: linear-gradient(#eff6fe, #dbe6f2); border-bottom: 1px solid #53698b; }
.tool { display: flex; flex-direction: column; align-items: center; flex: none; white-space: nowrap; line-height: 16px; text-align: center; }
.tool > svg { width: 14px; height: 14px; margin-bottom: 4px; }
.tool.off { color: #8f959d; }
.tool.dd::after { content: ""; margin-top: 21px; border: 3px solid transparent; border-top: 4px solid; border-bottom: 0; }
.toggle { display: flex; width: 66px; height: 22px; margin: 5px 0 5px 4px; border: 1px solid #9db1ca; border-radius: 2px; background: linear-gradient(#dde6f0, #f6f9fd); font: bold 11px/20px "Liberation Mono", monospace; color: #6a7787; }
.toggle input { appearance: none; width: 28px; height: 20px; margin: 0; background: linear-gradient(135deg, #b9c6d6, #e2eaf3); border-right: 1px solid #9db1ca; }
.toggle span { flex: 1; }
.tool.second { margin: 0 3px; }
.w24 { width: 24px; } .w42 { width: 42px; } .w48 { width: 48px; } .w60 { width: 60px; }
.w66 { width: 66px; } .w72 { width: 72px; } .w78 { width: 78px; }

/* main info */
.info { position: relative; height: 129px; flex: none; padding: 8px 1px 3px 0; }
.info-body { display: flex; height: 118px; padding: 12px 3px 0 2px; border: 1px solid #53698b; border-bottom-color: #6f8db4; border-radius: 6px 6px 0 0; }
.cap { position: absolute; left: 839px; top: 0; width: 65px; height: 20px; padding-bottom: 2px; text-align: center; background: linear-gradient(#f2f7fd, #dae7f5); border: 1px solid #53698b; border-top: 0; border-radius: 0 0 4px 4px; color: #17306b; line-height: 14px; }
.info-left { flex: 1; background: #fff; border: 1px solid #8ba5c7; border-top: 0; overflow: hidden; }
.info-right { width: 200px; background: #fff; border: 1px solid #8ba5c7; border-top: 0; }
table { border-collapse: separate; border-spacing: 0; table-layout: fixed; width: 100%; }
.grid th, .grid td { padding: 0; overflow: hidden; white-space: nowrap; }
.grid th { height: 32px; font: 12px/16px "Noto Sans CJK SC", sans-serif; color: #000; background: linear-gradient(#f4f9ff, #dfeaf7); border: solid #8ba5c7; border-width: 1px 1px 1px 0; }
.grid th.rest { background: #d0ddee; }
.grid th.corner { background: linear-gradient(135deg, #0000 50%, #3a6fd0 50%) right bottom / 11px 11px no-repeat, #e6eff9; }
.grid td { height: 22px; padding-left: 1px; color: #000; background: #afd2f7; border-right: 1px solid #c2daf5; border-bottom: 1px solid #c2daf5; }
.grid td.mark { background: #c3c8d0; padding-left: 3px; }
.small th { height: 21px; line-height: 14px; }
.c33 { width: 33px; } .c34 { width: 34px; } .c35 { width: 35px; } .c40 { width: 40px; } .c41 { width: 41px; } .c44 { width: 44px; }
.c50 { width: 50px; } .c52 { width: 52px; } .c55 { width: 55px; } .c56 { width: 56px; } .c58 { width: 58px; } .c63 { width: 63px; }
.c64 { width: 64px; } .c70 { width: 70px; } .c73 { width: 73px; } .c75 { width: 75px; } .c88 { width: 88px; } .c90 { width: 90px; }
.c94 { width: 94px; } .c103 { width: 103px; } .c112 { width: 112px; } .c120 { width: 120px; } .c150 { width: 150px; } .c155 { width: 155px; } .c500 { width: 500px; }

.hsplit { height: 6px; flex: none; background: linear-gradient(#d5dde8, #8f9aaa); border-bottom: 1px solid #6d7c92; }
.vsplit { flex: none; background: linear-gradient(90deg, #f4f7fb, #b4bfcd 60%, #6b7d96); }
.s6 { width: 6px; } .s8 { width: 8px; } .s10 { width: 10px; }

/* process area */
.lower { flex: 1; display: flex; min-height: 0; border-bottom: 1px solid #3c5a82; }
.flow { position: relative; display: flex; flex-direction: column; width: 1045px; flex: none; padding: 10px 0 0 1px; background: #edf5fd; }
.cap2 { position: absolute; left: 256px; top: 0; width: 200px; height: 20px; padding-left: 10px; line-height: 17px; background: linear-gradient(#edf5fd, #d5e3f4); border: 1px solid #53698b; border-top: 0; border-radius: 4px; color: #17306b; }
.flow-body { flex: 1; display: flex; min-height: 0; padding-top: 10px; border: 1px solid #53698b; border-width: 1px 0 0 1px; border-radius: 6px 0 0 0; }
.strip { width: 22px; flex: none; padding: 4px 0 0 2px; background: linear-gradient(90deg, #cddffa, #f4f8fe); }
.strip button { width: 20px; height: 90px; padding: 0 0 18px; writing-mode: vertical-rl; text-orientation: upright; font-weight: 700; line-height: 20px; color: #0b2350; background: linear-gradient(90deg, #e6effc, #a9c5f0); clip-path: polygon(0 0, 100% 0, 100% 100%, 0 75%); }
.device { width: 196px; flex: none; display: flex; flex-direction: column; margin-bottom: 3px; padding: 7px 0 0 6px; background: linear-gradient(90deg, #8fb3e8, #dceafd); border: 1px solid #4a74b4; }
.hint { display: flex; align-items: center; justify-content: space-between; height: 34px; margin-right: 1px; padding: 0 6px 0 14px; background: #f2f3f5; }
.dtree { height: 278px; margin-right: 1px; background: #fff; border: 1px solid #8ba5c7; padding: 0 0 0 5px; color: #000; white-space: normal; }
.node, .r { display: flex; align-items: center; height: 19px; white-space: nowrap; color: #000; }
.c { display: flex; align-items: center; justify-content: center; width: 16px; height: 19px; }
.c svg { width: 9px; height: 9px; }
.t { background: repeating-linear-gradient(#666 0 1px, #0000 1px 2px) 8px 0 / 1px 19px no-repeat, repeating-linear-gradient(90deg, #666 0 1px, #0000 1px 2px) 8px 9px / 8px 1px no-repeat; }
.v { background: repeating-linear-gradient(#666 0 1px, #0000 1px 2px) 8px 0 / 1px 19px no-repeat; }
.l { background: repeating-linear-gradient(#666 0 1px, #0000 1px 2px) 8px 0 / 1px 10px no-repeat, repeating-linear-gradient(90deg, #666 0 1px, #0000 1px 2px) 8px 9px / 8px 1px no-repeat; }
.e0 { background: repeating-linear-gradient(90deg, #666 0 1px, #0000 1px 2px) 8px 9px / 8px 1px no-repeat; }
.r > svg { width: 26px; height: 16px; padding: 0 5px; background: repeating-linear-gradient(90deg, #666 0 1px, #0000 1px 2px) 0 7px / 4px 1px no-repeat; }
.node > svg, .sel svg { width: 15px; height: 14px; margin: 0 6px 0 7px; }
.sel { display: flex; align-items: center; height: 19px; margin-left: 3px; padding-right: 6px; background: linear-gradient(#fdf0b8, #fbda6e); border: 1px solid #f0d070; }
.sel svg { margin: 0 6px 0 1px; }
.dtree .c { width: 15px; }
.note { padding: 7px 0 0 5px; height: 37px; line-height: 14px; color: #10233f; white-space: nowrap; }
.subs { height: 129px; background: #fff; border: 1px solid #8ba5c7; border-width: 0 0 1px 1px; }
.sub td { background: #fff; text-align: center; padding: 0; border-color: #b6cdec; }
.sub td.hl { background: #afd2f7; }
.sub input { appearance: none; display: grid; place-items: center; width: 13px; height: 13px; margin: 0 auto; border: 1px solid #a9a9a9; background: #f6f6f6; font: 10px/11px "DejaVu Sans", sans-serif; color: #999; }
.sub input::after { content: "✓"; }

.proc { width: 434px; flex: none; display: flex; flex-direction: column; margin-bottom: 3px; background: #fff; border: 1px solid #6f8db4; }
.proc-head { height: 18px; flex: none; line-height: 17px; color: #000; background: linear-gradient(#f2f7fd, #dbe7f5); border-bottom: 1px solid #b6c9e2; }
.proc-view { flex: 1; display: flex; min-height: 0; padding-top: 3px; overflow: hidden; }
.ptree { width: 416px; flex: none; }
.ptree td { height: 19px; padding: 0 0 0 6px; line-height: 16px; color: #000; white-space: nowrap; border-right: 1px solid #e2e2e2; }
.ptree td:first-child { padding-left: 1px; }
.vscroll { width: 16px; display: flex; align-items: flex-end; justify-content: center; padding-bottom: 6px; background: #f8f8f8; }
.hscroll { display: flex; align-items: center; gap: 4px; height: 16px; flex: none; padding: 0 6px; background: #f4f4f4; }
.thumb { flex: 1; display: flex; align-items: center; justify-content: center; height: 14px; border: 1px solid #8f97a3; border-radius: 2px; background: linear-gradient(#f6f8fb, #dfe4ec); }
.thumb b { width: 8px; height: 8px; background: repeating-linear-gradient(90deg, #777 0 1px, #0000 1px 2px); }
.thumb.part { flex: none; width: 219px; }
.hscroll.gap { margin-right: 18px; padding: 0 5px 0 3px; }
.end { margin-left: auto; }
.mid { flex: 1; display: flex; flex-direction: column; justify-content: flex-end; background: #fff; border: 1px solid #4a74b4; }

/* remarks */
.remark { flex: 1; min-width: 0; display: flex; flex-direction: column; padding-bottom: 1px; }
.band1 { height: 26px; display: flex; align-items: center; justify-content: flex-end; padding-right: 4px; background: linear-gradient(#bcd0ea, #dfeaf5); border-bottom: 1px solid #a9b8cb; }
.band2 { height: 28px; background: linear-gradient(#c4d7f8, #eff6ff); border-bottom: 5px solid #8aaee5; }
.remark-cols { flex: 1; display: flex; min-height: 0; }
.rcol { flex: 1; display: flex; flex-direction: column; border: solid #6f94c4; border-width: 0 2px 1px 0; }
.rcol.first { flex: none; width: 198px; }
.rhead { height: 26px; padding-left: 3px; line-height: 24px; color: #17306b; background: linear-gradient(#f2f7fd, #d8e5f2); border-bottom: 2px solid #6a87ac; }
.rbody { flex: 1; display: flex; justify-content: flex-end; background: #efefef; }
.rscroll { width: 17px; display: flex; flex-direction: column; justify-content: space-between; align-items: center; padding: 8px 0 6px; background: #f3f3f3; border-left: 1px solid #e2e2e2; }

/* status bar */
.status { display: flex; align-items: center; height: 32px; flex: none; padding: 0 31px 2px 7px; background: linear-gradient(#eff6fe, #d9e5f2); border-top: 1px solid #53698b; }
.s-info { width: 59px; padding-left: 10px; }
.status .s-info + svg { margin: 0 0 0 10px; }
.s-user { padding-left: 8px; width: 92px; }
.s-model { width: 497px; }
.s-ver { flex: 1; color: #17306b; }
.status a { text-decoration: underline; margin-right: 25px; }
.clk { margin-right: 8px; }

/* taskbar */
.taskbar { display: flex; gap: 4px; height: 40px; flex: none; padding: 1px 0 0; background: linear-gradient(105deg, #0000 1080px, #14396a 1130px, #0000 1200px, #0000 1260px, #173c6c 1320px, #0000 1400px), linear-gradient(90deg, #0a2347, #0b2f63 40%, #04285a 60%, #0b2c58); border-top: 1px solid #5a6c85; }
.start { width: 56px; display: grid; place-items: center; }
.task { width: 58px; height: 38px; display: grid; place-items: center; border: 1px solid #8ea0bb; border-radius: 3px; background: linear-gradient(#5a7297, #2c4873 50%, #1c3a66); }
.task.active { width: 55px; background: linear-gradient(135deg, #c5d2dc, #7c98a8 60%, #a4bcc4); }
.task.narrow { width: 52px; }
.task.stack { margin-right: 4px; box-shadow: 3px 0 0 -1px #2c4873, 4px 0 0 -1px #8ea0bb; }
.task.narrow.stack { margin-right: 5px; }
.task.hot { background: radial-gradient(#fff0a8, #c8a85c); border-color: #f3e3b0; }
.tray { margin-left: auto; display: flex; align-items: center; gap: 9px; color: #fff; }
.clock { width: 68px; text-align: center; font: 12px/18px "Open Sans", sans-serif; }
.peek { width: 13px; height: 38px; border: 1px solid #7c8ca4; background: linear-gradient(135deg, #566b8b, #14294a); }

/* confirmation window */
.dialog { position: absolute; left: 538px; top: 252px; width: 844px; height: 535px; display: flex; flex-direction: column; padding: 0 5px 7px 6px; border: 1px solid #1c2740; border-radius: 7px; background: linear-gradient(110deg, #c9d6ea, #b4c6e4 15%, #9db5db 30%, #a3badf 60%, #b6c9e6); box-shadow: 0 3px 13px 3px rgba(0, 0, 0, .65), inset 0 0 0 1px #dbe6f6; }
.dialog header { display: flex; align-items: center; height: 28px; flex: none; padding: 0 0 1px 2px; }
.dialog h2 { flex: 1; padding-left: 5px; font: 12px/16px "Noto Sans CJK SC", sans-serif; color: #000; }
.dbtns { align-self: flex-start; display: flex; height: 19px; border: 1px solid #4a5670; border-top: 0; border-radius: 0 0 5px 5px; overflow: hidden; background: linear-gradient(#d3ddeb, #b1bfd5 50%, #8fa2c0 51%, #b4c5de); }
.dbtns button { width: 27px; display: grid; place-items: center; border-right: 1px solid #4a5670; }
.dbtns .close { width: 47px; border: 0; background: linear-gradient(#e9a99b, #d0604c 48%, #b02e17 50%, #d6674f); }
.client { flex: 1; display: flex; flex-direction: column; padding: 38px 24px 15px 11px; background: #f0f0f0; border: 1px solid #54657f; box-shadow: 0 0 0 1px #cfdcf0; }
.dgrid { flex: 1; border: 1px solid #000; background: #ababab; padding-top: 1px; }
.dgrid table { width: 781px; }
.dgrid th { height: 19px; padding: 0 0 0 6px; text-align: left; font-weight: 400; line-height: 16px; color: #000; background: linear-gradient(#fff, #eef0f3); border-right: 1px solid #d8dadd; border-bottom: 1px solid #a0a0a0; }
.dgrid td { height: 23px; padding: 0 2px; line-height: 16px; color: #648fcb; background: #fff; border-right: 1px solid #a0a0a0; border-bottom: 1px solid #a0a0a0; white-space: nowrap; overflow: hidden; }
.dgrid td:first-child { padding-left: 7px; background: linear-gradient(90deg, #fff, #f2f3f5); border-bottom-color: #e4e6e9; }
.dgrid .tri-r { border-width: 5px 0 5px 5px; }
.dgrid td.cur { background: #3399ff; }
.dgrid .red td { color: #d01010; }
.dgrid input { appearance: none; display: block; width: 13px; height: 13px; margin: 0 auto; border: 1px solid #8e8f8f; background: linear-gradient(135deg, #cdd0d4, #f8f8f8) content-box #f4f4f4; padding: 2px; }
.actions { display: flex; justify-content: flex-end; gap: 8px; padding-top: 7px; }
.actions button { width: 86px; height: 35px; color: #000; border: 1px solid #707070; border-radius: 3px; background: linear-gradient(#f3f3f3, #ebebeb 50%, #dddddd 51%, #cfcfcf); box-shadow: inset 0 0 0 1px #fbfbfb; }
```
